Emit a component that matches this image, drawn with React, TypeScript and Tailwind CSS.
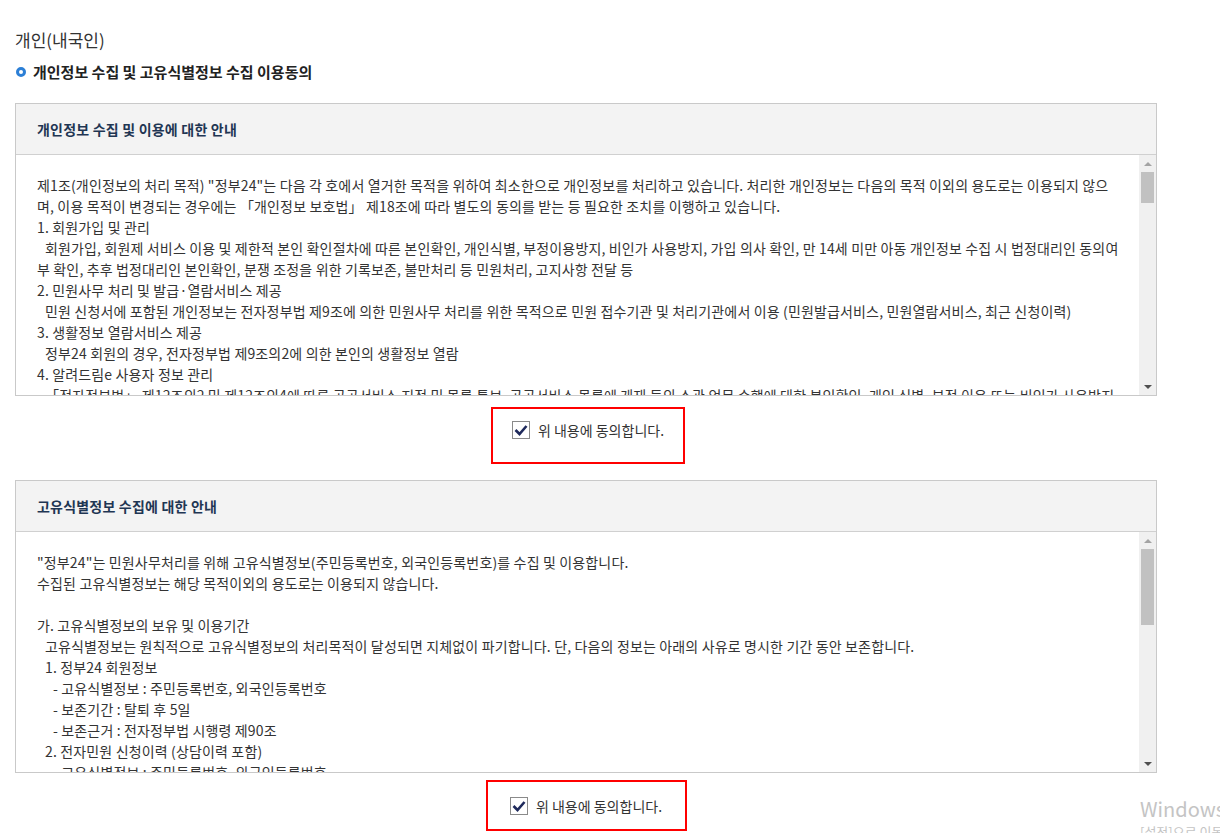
import React from 'react';

type Line = { t: string; indent?: 0 | 1 | 2 };

const privacyLines: Line[] = [
  { t: '제1조(개인정보의 처리 목적) "정부24"는 다음 각 호에서 열거한 목적을 위하여 최소한으로 개인정보를 처리하고 있습니다. 처리한 개인정보는 다음의 목적 이외의 용도로는 이용되지 않으' },
  { t: '며, 이용 목적이 변경되는 경우에는 「개인정보 보호법」 제18조에 따라 별도의 동의를 받는 등 필요한 조치를 이행하고 있습니다.' },
  { t: '1. 회원가입 및 관리' },
  { t: '회원가입, 회원제 서비스 이용 및 제한적 본인 확인절차에 따른 본인확인, 개인식별, 부정이용방지, 비인가 사용방지, 가입 의사 확인, 만 14세 미만 아동 개인정보 수집 시 법정대리인 동의여', indent: 1 },
  { t: '부 확인, 추후 법정대리인 본인확인, 분쟁 조정을 위한 기록보존, 불만처리 등 민원처리, 고지사항 전달 등' },
  { t: '2. 민원사무 처리 및 발급·열람서비스 제공' },
  { t: '민원 신청서에 포함된 개인정보는 전자정부법 제9조에 의한 민원사무 처리를 위한 목적으로 민원 접수기관 및 처리기관에서 이용 (민원발급서비스, 민원열람서비스, 최근 신청이력)', indent: 1 },
  { t: '3. 생활정보 열람서비스 제공' },
  { t: '정부24 회원의 경우, 전자정부법 제9조의2에 의한 본인의 생활정보 열람', indent: 1 },
  { t: '4. 알려드림e 사용자 정보 관리' },
  { t: '「전자정부법」 제12조의2 및 제12조의4에 따른 공공서비스 지정 및 목록 통보, 공공서비스 목록에 게재 등의 소관 업무 수행에 대한 본인확인, 개인 식별, 부정 이용 또는 비인가 사용방지', indent: 1 },
];

const uniqueLines: Line[] = [
  { t: '"정부24"는 민원사무처리를 위해 고유식별정보(주민등록번호, 외국인등록번호)를 수집 및 이용합니다.' },
  { t: '수집된 고유식별정보는 해당 목적이외의 용도로는 이용되지 않습니다.' },
  { t: '' },
  { t: '가. 고유식별정보의 보유 및 이용기간' },
  { t: '고유식별정보는 원칙적으로 고유식별정보의 처리목적이 달성되면 지체없이 파기합니다. 단, 다음의 정보는 아래의 사유로 명시한 기간 동안 보존합니다.', indent: 1 },
  { t: '1. 정부24 회원정보', indent: 1 },
  { t: '- 고유식별정보 : 주민등록번호, 외국인등록번호', indent: 2 },
  { t: '- 보존기간 : 탈퇴 후 5일', indent: 2 },
  { t: '- 보존근거 : 전자정부법 시행령 제90조', indent: 2 },
  { t: '2. 전자민원 신청이력 (상담이력 포함)', indent: 1 },
  { t: '- 고유식별정보 : 주민등록번호, 외국인등록번호', indent: 2 },
];

function FakeScrollbar({ thumbTop, thumbHeight }: { thumbTop: number; thumbHeight: number }) {
  return (
    <div className="w-[17px] shrink-0 bg-[#f0f0f0] flex flex-col">
      <div className="h-[17px] flex items-center justify-center">
        <div className="w-0 h-0 border-l-[4px] border-r-[4px] border-b-[4px] border-l-transparent border-r-transparent border-b-[#a3a3a3]" />
      </div>
      <div className="flex-1 relative">
        <div
          className="absolute left-[2px] w-[13px] bg-[#c1c1c1]"
          style={{ top: thumbTop, height: thumbHeight }}
        />
      </div>
      <div className="h-[17px] flex items-center justify-center">
        <div className="w-0 h-0 border-l-[4px] border-r-[4px] border-t-[4px] border-l-transparent border-r-transparent border-t-[#505050]" />
      </div>
    </div>
  );
}

function TermsBox({ title, lines, thumbTop, thumbHeight }: { title: string; lines: Line[]; thumbTop: number; thumbHeight: number }) {
  return (
    <div className="w-[1142px] border border-[#c9c9c9]">
      <div className="h-[51px] bg-[#f3f3f3] border-b border-[#d0d0d0] flex items-center pl-[21px] text-[14px] tracking-[0.2px] font-bold text-[#1f3653]">
        {title}
      </div>
      <div className="h-[240px] flex">
        <div className="flex-1 overflow-hidden pt-[20px] pl-[21px] pr-[18px] text-[14px] tracking-[0.15px] leading-[21px] text-[#333]">
          {lines.map((l, i) => (
            <div
              key={i}
              className={`whitespace-nowrap h-[21px] ${l.indent === 1 ? 'pl-2' : l.indent === 2 ? 'pl-4' : ''}`}
            >
              {l.t}
            </div>
          ))}
        </div>
        <FakeScrollbar thumbTop={thumbTop} thumbHeight={thumbHeight} />
      </div>
    </div>
  );
}

function AgreeCheck() {
  return (
    <div className="flex items-center gap-2 h-[20px]">
      <div className="w-[18px] h-[18px] border border-[#8a8a8a] bg-white flex items-center justify-center">
        <svg width="14" height="12" viewBox="0 0 14 12">
          <path d="M1.5 6 L5.5 10 L12.5 2" fill="none" stroke="#1f2a5c" strokeWidth="2.6" strokeLinejoin="miter" />
        </svg>
      </div>
      <span className="text-[14px] leading-[20px] text-[#333]">위 내용에 동의합니다.</span>
    </div>
  );
}

export default function App() {
  return (
    <div
      className="relative h-[833px] overflow-hidden bg-white"
      style={{ fontFamily: '"Noto Sans CJK KR", "Noto Sans", sans-serif' }}
    >
      <div className="pl-[15px] pt-[28px]">
        <h1 className="text-[17px] leading-[24px] text-[#333]">개인(내국인)</h1>
        <div className="mt-[10px] flex items-center gap-[7px] h-[20px] pl-[1px]">
          <span className="w-[10px] h-[10px] rounded-full border-[3px] border-[#2c7fd6]" />
          <h2 className="text-[15px] font-bold text-[#222]">개인정보 수집 및 고유식별정보 수집 이용동의</h2>
        </div>

        <div className="mt-[21px]">
          <TermsBox title="개인정보 수집 및 이용에 대한 안내" lines={privacyLines} thumbTop={0} thumbHeight={31} />
        </div>

        <div className="w-[1142px] flex justify-center mt-[11px]">
          <div className="w-[194px] h-[57px] border-2 border-[#ff0000] flex items-start justify-center pt-[11px] translate-x-[2px]">
            <AgreeCheck />
          </div>
        </div>

        <div className="mt-[16px]">
          <TermsBox title="고유식별정보 수집에 대한 안내" lines={uniqueLines} thumbTop={0} thumbHeight={76} />
        </div>

        <div className="w-[1142px] flex justify-center mt-[7px]">
          <div className="w-[201px] h-[51px] border-2 border-[#ff0000] flex items-center justify-center">
            <AgreeCheck />
          </div>
        </div>
      </div>

      {/* windows activation watermark */}
      <div className="absolute left-[1140px] top-[799px] whitespace-nowrap text-[#c4c4c4] leading-none">
        <div className="text-[20px]">Windows 정품 인증</div>
        <div className="text-[13px] mt-[6px]">[설정]으로 이동하여 Windows를 정품 인증합니다.</div>
      </div>
    </div>
  );
}
